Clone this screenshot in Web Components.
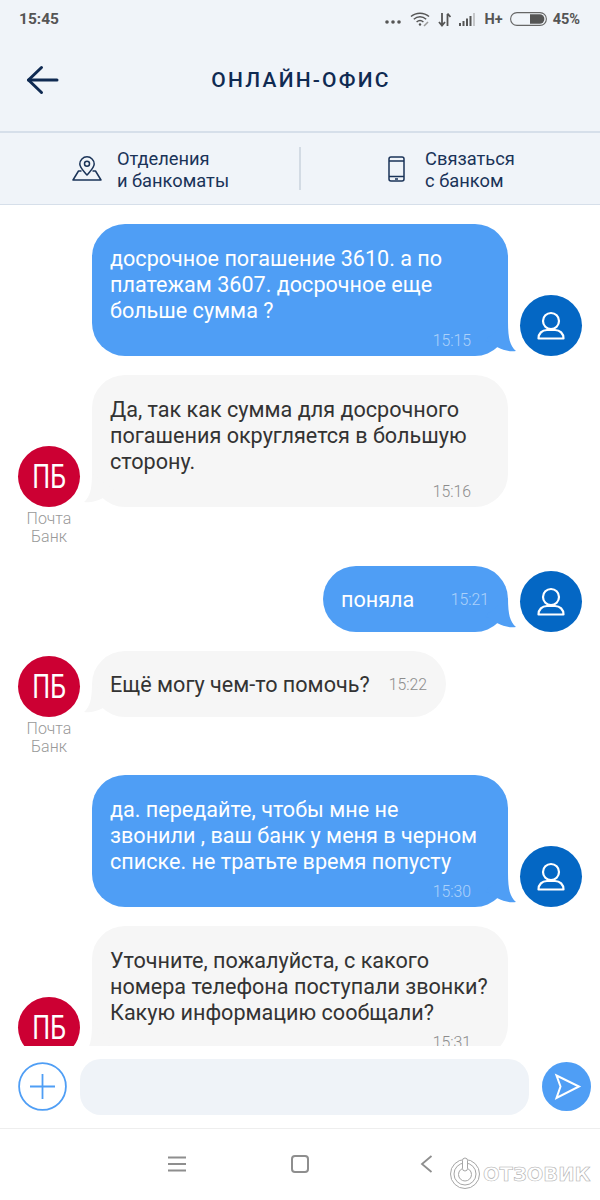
<!DOCTYPE html>
<html lang="ru">
<head>
<meta charset="utf-8">
<title>Онлайн-офис</title>
<style>
  html, body { margin: 0; padding: 0; background: #fff; }
  body {
    width: 600px;
    height: 1200px;
    overflow: hidden;
    display: flex;
    flex-direction: column;
    font-family: Roboto, "Liberation Sans", sans-serif;
  }
</style>
</head>
<body>
<status-bar></status-bar>
<app-header>ОНЛАЙН-ОФИС</app-header>
<quick-links></quick-links>
<chat-list>
  <chat-message side="out" time="15:15">досрочное погашение 3610. а по платежам 3607. досрочное еще больше сумма ?</chat-message>
  <chat-message side="in" time="15:16">Да, так как сумма для досрочного погашения округляется в большую сторону.</chat-message>
  <chat-message side="out" time="15:21" compact>поняла</chat-message>
  <chat-message side="in" time="15:22" compact>Ещё могу чем-то помочь?</chat-message>
  <chat-message side="out" time="15:30">да. передайте, чтобы мне не<br>звонили , ваш банк у меня в черном<br>списке. не тратьте время попусту</chat-message>
  <chat-message side="in" time="15:31" nolabel>Уточните, пожалуйста, с какого номера телефона поступали звонки? Какую информацию сообщали?</chat-message>
</chat-list>
<composer-bar></composer-bar>
<nav-bar></nav-bar>

<script>
class StatusBar extends HTMLElement {
  connectedCallback() {
    this.attachShadow({ mode: 'open' });
    this.shadowRoot.innerHTML = `
      <style>
        :host {
          display: flex;
          align-items: center;
          justify-content: space-between;
          height: 38px;
          padding: 0 20px 0 19px;
          box-sizing: border-box;
          background: #f0f4f9;
          color: #555;
          font: 700 14.5px Roboto, sans-serif;
        }
        .right { display: flex; align-items: center; }
        svg { display: block; }
        .clock { font-size: 15.5px; }
        .hp { margin: 0 7px 0 8px; font-size: 14.5px; }
        .pct { margin-left: 6px; }
      </style>
      <span class="clock">15:45</span>
      <div class="right">
        <svg width="16" height="6" viewBox="0 0 16 6" style="margin-right:9px;margin-top:6px" fill="#555">
          <circle cx="2" cy="3" r="1.8"/><circle cx="8" cy="3" r="1.8"/><circle cx="14" cy="3" r="1.8"/>
        </svg>
        <svg width="21" height="16" viewBox="0 0 21 16" fill="none" stroke="#555" stroke-width="1.5" style="margin-right:7px">
          <path d="M1 5.5C6 1 14 1 19 5.5"/><path d="M3.8 8.2C7.5 5 12.5 5 16.2 8.2"/><path d="M6.6 11C8.6 9.3 11.4 9.3 13.4 11"/>
          <circle cx="10" cy="13.5" r="1.2" fill="#555" stroke="none"/>
          <path d="M14 15l4-4" stroke="#999" stroke-width="1.6"/>
        </svg>
        <svg width="13" height="15" viewBox="0 0 13 15" fill="none" stroke="#555" stroke-width="1.8" style="margin-right:8px">
          <path d="M4 1v12M1 10l3 3.5L7 10" stroke-linejoin="miter"/><path d="M9.5 14V2M9.5 1.5L12.5 5"/>
        </svg>
        <svg width="18" height="13" viewBox="0 0 18 13" fill="#555">
          <rect x="0" y="10" width="2" height="3"/><rect x="3.5" y="8" width="2" height="5"/><rect x="7" y="5.5" width="2" height="7.5"/><rect x="10.5" y="3" width="2" height="10"/>
          <rect x="14" y="0" width="2" height="13" fill="#c5c7ca"/>
        </svg>
        <span class="hp">H+</span>
        <svg width="37" height="14" viewBox="0 0 37 14">
          <rect x=".6" y=".6" width="35.800" height="12.8" rx="6.4" fill="none" stroke="#666" stroke-width="1.1"/>
          <path d="M20 2.2h9.6a4.8 4.8 0 0 1 0 9.6H20z" fill="#555"/>
        </svg>
        <span class="pct">45%</span>
      </div>
    `;
  }
}

class AppHeader extends HTMLElement {
  connectedCallback() {
    this.attachShadow({ mode: 'open' });
    this.shadowRoot.innerHTML = `
      <style>
        :host {
          display: block;
          background: #f0f4f9;
          border-bottom: 2px solid #d6dfea;
        }
        .bar {
          display: grid;
          grid-template-columns: 100px 1fr 100px;
          align-items: center;
          height: 93px;
          padding-bottom: 10px;
          box-sizing: border-box;
        }
        .back { padding-left: 26px; display: flex; }
        h1 {
          margin: 0;
          padding-left: 2px;
          text-align: center;
          color: #0f2a52;
          font: 500 21px Roboto, sans-serif;
          letter-spacing: 2.2px;
        }
      </style>
      <div class="bar">
        <div class="back">
          <svg width="33" height="30" viewBox="0 0 33 30" fill="none" stroke="#0f2a52" stroke-width="3" stroke-linecap="round" stroke-linejoin="round">
            <path d="M31 15H2.5"/><path d="M15.500 2.500L2.500 15l13 12.500"/>
          </svg>
        </div>
        <h1><slot></slot></h1>
        <div></div>
      </div>
    `;
  }
}

class QuickLink extends HTMLElement {
  connectedCallback() {
    this.attachShadow({ mode: 'open' });
    this.shadowRoot.innerHTML = `
      <style>
        :host {
          display: flex;
          align-items: center;
          justify-content: center;
          padding-left: 2px;
          color: #1a3358;
          font: 400 18.3px/22px Roboto, sans-serif;
        }
        .icon { display: flex; }
        .text { padding-top: 2px; }
      </style>
      <div class="icon"><slot name="icon"></slot></div>
      <div class="text"><slot></slot></div>
    `;
  }
}

class QuickLinks extends HTMLElement {
  connectedCallback() {
    this.attachShadow({ mode: 'open' });
    this.shadowRoot.innerHTML = `
      <style>
        :host {
          display: grid;
          grid-template-columns: 299px 2px 299px;
          align-items: center;
          height: 72px;
          box-sizing: border-box;
          background: #f0f4f9;
          border-bottom: 1px solid #d6dfea;
        }
        .sep { height: 43px; background: #d3dbe4; }
      </style>
      <quick-link>
        <svg slot="icon" width="30" height="25" viewBox="0 0 30 25" fill="none" stroke="#1a3358" stroke-width="1.500" stroke-linejoin="round" style="margin-right:15px">
          <path d="M15 19C11 14 7.800 11.500 7.800 8a7.200 7.200 0 0 1 14.400 0C22.200 11.500 19 14 15 19z"/>
          <circle cx="15" cy="7.800" r="2.500"/>
          <path d="M9.500 15H6.500L1 24h28l-5.500-9h-3"/>
        </svg>Отделения<br>и банкоматы</quick-link>
      <div class="sep"></div>
      <quick-link>
        <svg slot="icon" width="17" height="26" viewBox="0 0 17 26" fill="none" stroke="#1a3358" stroke-width="1.500" style="margin-right:20px">
          <rect x="1" y="1" width="15" height="24" rx="2"/>
          <path d="M1 5h15M1 20.500h15"/>
          <path d="M7 23h3"/>
        </svg>Связаться<br>с банком</quick-link>
    `;
  }
}

class ChatList extends HTMLElement {
  connectedCallback() {
    this.attachShadow({ mode: 'open' });
    this.shadowRoot.innerHTML = `
      <style>
        :host {
          display: flex;
          flex-direction: column;
          gap: 19px;
          height: 841px;
          padding-top: 19px;
          box-sizing: border-box;
          overflow: hidden;
          background: #fff;
          flex: none;
        }
      </style>
      <slot></slot>
    `;
  }
}

class ChatAvatar extends HTMLElement {
  connectedCallback() {
    const kind = this.getAttribute('kind');
    this.attachShadow({ mode: 'open' });
    this.shadowRoot.innerHTML = `
      <style>
        :host {
          display: flex;
          align-items: center;
          justify-content: center;
          width: 62px;
          height: 61px;
          border-radius: 50%;
          color: #fff;
          background: ${kind === 'bank' ? '#cc0033' : '#0467c4'};
          font: 400 33px Roboto, sans-serif;
        }
        span { display: block; transform: scaleX(.76); }
      </style>
      ${kind === 'bank' ? '<span>ПБ</span>' : `
      <svg width="62" height="61" viewBox="0 0 62 61" fill="none" stroke="#fff" stroke-width="2.200" stroke-linejoin="round">
        <circle cx="31" cy="26" r="8"/>
        <path d="M18.500 43.500c0-5 3.500-8.500 8.500-8.500h8c5 0 8.500 3.500 8.500 8.500z"/>
      </svg>`}
    `;
  }
}

class ChatMessage extends HTMLElement {
  connectedCallback() {
    const out = this.getAttribute('side') === 'out';
    const compact = this.hasAttribute('compact');
    const showLabel = !out && !this.hasAttribute('nolabel');
    this.attachShadow({ mode: 'open' });
    this.shadowRoot.innerHTML = `
      <style>
        :host {
          display: grid;
          flex: none;
          padding: 0 18px;
          column-gap: 12px;
          justify-content: ${out ? 'end' : 'start'};
          grid-template-columns: ${out ? 'auto 62px' : '62px auto'};
        }
        .bubble {
          position: relative;
          grid-row: 1;
          grid-column: ${out ? 1 : 2};
          box-sizing: border-box;
          border-radius: 33px;
          background: ${out ? '#4f9ef5' : '#f6f6f6'};
          color: ${out ? '#fff' : '#333'};
          font: 400 21.6px/26px Roboto, sans-serif;
        }
        .bubble.block { width: 416px; padding: 22px 18px 5px 18px; }
        .bubble.line {
          display: flex;
          justify-content: space-between;
          gap: 19px;
          min-width: 185px;
          padding: 21px 19px 19px 18px;
        }
        .time {
          font: 300 15.8px/20px Roboto, sans-serif;
          color: ${out ? 'rgba(255,255,255,.55)' : '#8c8c8c'};
        }
        .block .time { text-align: right; margin-top: 7px; padding-right: 19px; }
        .line .time { line-height: 26px; }
        .tail {
          position: absolute;
          bottom: 0;
          ${out ? 'right: -8px' : 'left: -8px; transform: scaleX(-1)'};
        }
        .body, .time { position: relative; }
        chat-avatar { grid-row: 1; grid-column: ${out ? 2 : 1}; align-self: end; }
        .label {
          grid-row: 2;
          grid-column: 1;
          margin-top: 3px;
          height: 36.5px;
          color: #999;
          text-align: center;
          font: 300 16px/18px Roboto, sans-serif;
        }
      </style>
      <div class="bubble ${compact ? 'line' : 'block'}">
        <svg class="tail" width="36" height="40" viewBox="0 0 36 40" fill="${out ? '#4f9ef5' : '#f6f6f6'}">
          <path d="M28 6C28 22 30 30 36 35 29 36 23 34 17 31L5 24Z"/>
        </svg>
        <div class="body"><slot></slot></div>
        <div class="time">${this.getAttribute('time')}</div>
      </div>
      <chat-avatar kind="${out ? 'user' : 'bank'}"></chat-avatar>
      ${showLabel ? '<div class="label">Почта<br>Банк</div>' : ''}
    `;
  }
}

class ComposerBar extends HTMLElement {
  connectedCallback() {
    this.attachShadow({ mode: 'open' });
    this.shadowRoot.innerHTML = `
      <style>
        :host {
          display: flex;
          align-items: center;
          gap: 13px;
          height: 82px;
          padding: 13px 9px 13px 18px;
          box-sizing: border-box;
          background: #fff;
          flex: none;
        }
        .round { flex: none; width: 49px; height: 49px; display: block; margin-bottom: 2px; }
        .field {
          flex: 1;
          height: 56px;
          border-radius: 21px;
          background: #eff3f8;
        }
      </style>
      <svg class="round" viewBox="0 0 49 49" fill="none" stroke="#4f9ef5" stroke-width="1.800">
        <circle cx="24.500" cy="24.500" r="23.400"/>
        <path d="M24.500 12v25M12 24.500h25"/>
      </svg>
      <div class="field"></div>
      <svg class="round" viewBox="0 0 49 49">
        <circle cx="24.500" cy="24.500" r="24.500" fill="#4f9ef5"/>
        <path d="M14.500 13.500L37 24.500 14.500 36 18.500 24.500z" fill="none" stroke="#fff" stroke-width="2" stroke-linejoin="miter"/>
      </svg>
    `;
  }
}

class NavBar extends HTMLElement {
  connectedCallback() {
    this.attachShadow({ mode: 'open' });
    this.shadowRoot.innerHTML = `
      <style>
        :host {
          display: block;
          position: relative;
          height: 72px;
          box-sizing: border-box;
          border-top: 1px solid #eeeeee;
          background: #fff;
          flex: none;
        }
        .keys {
          display: grid;
          grid-template-columns: 18px 18px 13px;
          column-gap: 105px;
          justify-content: start;
          align-items: center;
          padding: 26px 0 0 168px;
        }
        .keys svg { display: block; }
        .mark {
          position: absolute;
          left: 450px;
          top: 28px;
          display: flex;
          align-items: center;
          gap: 3px;
        }
        .word {
          font: 700 19.5px/24px "DejaVu Sans", sans-serif;
          color: #fff;
          -webkit-text-stroke: .6px #b0b0b0;
          margin-top: 3px;
        }
      </style>
      <div class="keys">
        <svg width="18" height="16" viewBox="0 0 18 16" stroke="#8e8e8e" stroke-width="1.800"><path d="M0 1.500h18M0 8h18M0 14.500h18"/></svg>
        <svg width="18" height="18" viewBox="0 0 18 18" fill="none" stroke="#8e8e8e" stroke-width="2"><rect x="1" y="1" width="16" height="16" rx="3"/></svg>
        <svg style="margin-left:6px" width="13" height="18" viewBox="0 0 13 18" fill="none" stroke="#8e8e8e" stroke-width="1.800"><path d="M11.500 1L2 9l9.500 8"/></svg>
      </div>
      <div class="mark">
        <svg width="30" height="32" viewBox="0 0 30 32" fill="none" stroke="#a6a6a6" stroke-width="1">
          <circle cx="15" cy="17" r="14.500"/>
          <circle cx="15" cy="17" r="11"/>
          <circle cx="15" cy="17.500" r="6.500"/>
          <rect x="12.500" y="1" width="5" height="13" rx="2.500" fill="#fff"/>
        </svg>
        <span class="word">ОТЗОВИК</span>
      </div>
    `;
  }
}

customElements.define('status-bar', StatusBar);
customElements.define('app-header', AppHeader);
customElements.define('quick-link', QuickLink);
customElements.define('quick-links', QuickLinks);
customElements.define('chat-list', ChatList);
customElements.define('chat-avatar', ChatAvatar);
customElements.define('chat-message', ChatMessage);
customElements.define('composer-bar', ComposerBar);
customElements.define('nav-bar', NavBar);
</script>
</body>
</html>
